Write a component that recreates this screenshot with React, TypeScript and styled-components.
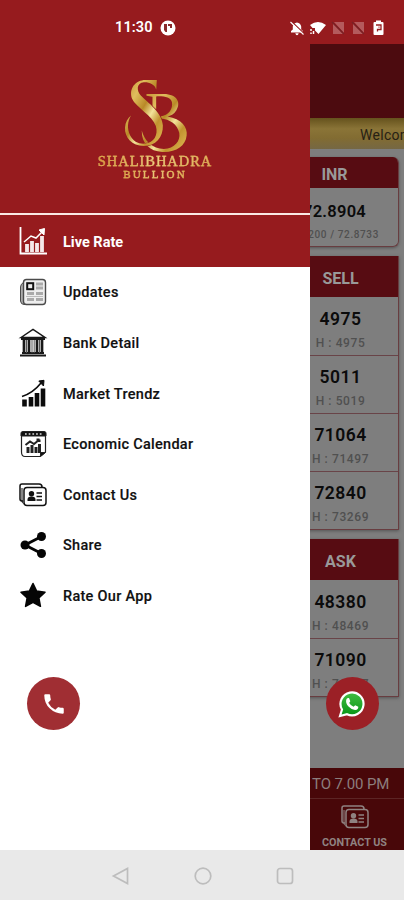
import React from "react";
import styled, { createGlobalStyle } from "styled-components";

const Global = createGlobalStyle`
  * { box-sizing: border-box; }
  body { margin: 0; font-family: Roboto, "Liberation Sans", sans-serif; }
  svg { display: block; flex: none; }
`;

const Phone = styled.div`
  position: relative;
  width: 404px;
  height: 900px;
  display: flex;
  flex-direction: column;
  overflow: hidden;
  background: #fff;
`;
const StatusBar = styled.header`
  height: 44px;
  flex: none;
  display: flex;
  align-items: center;
  padding: 11px 18px 0 115px;
  background: #961b1e;
  color: #fff;
`;
const Clock = styled.span`
  width: 45px;
  font-size: 14.5px;
  font-weight: 600;
  letter-spacing: 0.1px;
`;
const StatusIcons = styled.div`
  display: flex;
  align-items: center;
  gap: 4px;
  margin-left: auto;
`;
const Body = styled.main`
  flex: 1;
  min-height: 0;
  display: flex;
`;
const Drawer = styled.aside`
  width: 310px;
  flex: none;
  background: #fff;
`;
const Brand = styled.div`
  height: 172px;
  display: flex;
  flex-direction: column;
  align-items: center;
  padding-top: 33px;
  background: #961b1e;
  border-bottom: 1px solid #961b1e;
  box-shadow: inset 0 -2px #fbe9e4;
`;
const BrandName = styled.div`
  margin-top: -1px;
  font: 14.5px/17px "Liberation Serif", serif;
  letter-spacing: 0.95px;
  background: linear-gradient(90deg, #d9973b, #f0d58a 50%, #e0ad55);
  background-clip: text;
  color: transparent;
  -webkit-text-stroke: 0.3px #dfb25c;
`;
const BrandSub = styled(BrandName)`
  margin-top: -1px;
  font-size: 11px;
  line-height: 11px;
  letter-spacing: 2.2px;
`;
const MenuRow = styled.div<{ $active?: boolean }>`
  height: 50.6px;
  display: flex;
  align-items: center;
  gap: 15px;
  padding: 2px 0 0 18px;
  font-size: 14.5px;
  font-weight: ${(p) => (p.$active ? 700 : 500)};
  letter-spacing: ${(p) => (p.$active ? 0 : 0.28)}px;
  color: ${(p) => (p.$active ? "#fff" : "#111")};
  background: ${(p) => (p.$active ? "#961b1e" : "#fff")};
  -webkit-text-stroke: ${(p) => (p.$active ? 0 : 0.15)}px;
`;
const Page = styled.section`
  flex: 1;
  min-width: 0;
  display: flex;
  flex-direction: column;
  overflow: hidden;
  background: #7e7e7e;
`;
const PageHeader = styled.div`
  height: 74px;
  flex: none;
  background: #4c0b0f;
`;
const Ticker = styled.div`
  height: 31px;
  flex: none;
  padding-left: 50px;
  font-size: 14px;
  line-height: 34px;
  letter-spacing: 0.3px;
  white-space: nowrap;
  color: #272114;
  background: linear-gradient(#65521d, #8a7437 35%, #826c32 65%, #756744);
`;
const Card = styled.div<{ $round?: boolean }>`
  width: 117px;
  flex: none;
  margin: ${(p) => (p.$round ? "8px 0 0 -28px" : "9px 0 0 -28px")};
  border: 1px solid #683d40;
  border-top: 0;
  border-radius: ${(p) => (p.$round ? "6px" : "0")};
  box-shadow: 0 1px 3px #555;
  overflow: hidden;
`;
const CardHead = styled.div<{ $h: number }>`
  height: ${(p) => p.$h}px;
  display: flex;
  align-items: center;
  justify-content: center;
  padding-top: 3px;
  padding-right: ${(p) => (p.$h < 35 ? 12 : 0)}px;
  font-size: 16px;
  font-weight: 700;
  color: #999;
  background: #570c12;
`;
const Quote = styled.div<{ $h: number }>`
  height: ${(p) => p.$h}px;
  display: flex;
  flex-direction: column;
  align-items: center;
  padding-top: 12px;
  & + & { border-top: 1px solid #694448; padding-top: 11px; }
`;
const Price = styled.b<{ $usd?: boolean }>`
  margin-top: ${(p) => (p.$usd ? 1 : 0)}px;
  margin-left: ${(p) => (p.$usd ? -12 : 0)}px;
  font-size: ${(p) => (p.$usd ? 16.5 : 17.5)}px;
  line-height: 21px;
  letter-spacing: ${(p) => (p.$usd ? 0.25 : 0.45)}px;
  font-weight: 600;
  color: #0b0b0b;
`;
const High = styled.span<{ $usd?: boolean }>`
  margin-top: ${(p) => (p.$usd ? 5 : 6)}px;
  margin-left: ${(p) => (p.$usd ? -16 : 0)}px;
  font-size: ${(p) => (p.$usd ? 10 : 12)}px;
  font-weight: 500;
  line-height: 15px;
  letter-spacing: 0.6px;
  white-space: nowrap;
  color: #505050;
`;
const Hours = styled.div`
  height: 31px;
  flex: none;
  margin-top: auto;
  padding-left: 2px;
  font-size: 15px;
  line-height: 33px;
  letter-spacing: -0.1px;
  white-space: nowrap;
  color: #8c7e7d;
  background: #480709;
  border-bottom: 1px solid #5c2525;
`;
const Tab = styled.div`
  height: 51px;
  flex: none;
  display: flex;
  flex-direction: column;
  align-items: center;
  gap: 5px;
  padding: 4px 5px 0 0;
  font-size: 10.8px;
  font-weight: 700;
  line-height: 13px;
  color: #8f8281;
  background: #480709;
`;
const NavBar = styled.nav`
  height: 50px;
  flex: none;
  display: flex;
  justify-content: center;
  align-items: center;
  gap: 62px;
  padding: 1px 0 0 2px;
  background: #e9e9e9;
`;
const Fab = styled.button<{ $x: number }>`
  position: absolute;
  top: 677px;
  left: ${(p) => p.$x}px;
  width: 53px;
  height: 53px;
  display: grid;
  place-items: center;
  padding: 0;
  border: 0;
  border-radius: 50%;
  background: ${(p) => (p.$x > 200 ? "#9b2026" : "#a02e33")};
`;

const Monogram = () => (
  <svg width="67" height="77" viewBox="125 35 200 230">
    <defs>
      <linearGradient id="gold" x1="0" y1="0" x2="1" y2="1">
        <stop offset="0" stopColor="#c28b2c" />
        <stop offset=".25" stopColor="#e0bd5d" />
        <stop offset=".45" stopColor="#b98927" />
        <stop offset=".6" stopColor="#f3e39b" />
        <stop offset=".75" stopColor="#c2932f" />
        <stop offset="1" stopColor="#e2bd58" />
      </linearGradient>
    </defs>
    <g fill="url(#gold)">
      <path d="M198 86H245C290 84 302 112 287 135C280 146 270 151 261 153C302 160 322 185 318 210C315 242 285 261 245 259C208 257 183 234 184 195C192 226 216 250 250 250C282 249 300 225 296 202C291 177 268 161 240 159V153C264 151 278 130 274 110C270 95 252 92 227 93V131L216 122V94L198 91Z" />
      <path stroke="#961b1e" strokeWidth="3" paintOrder="stroke" d="M229 44L227 72C222 56 205 50 190 51C168 53 168 76 181 90C201 110 246 142 247 180C248 216 225 241 190 241C155 241 132 216 134 186C135 170 142 158 152 150C141 168 140 190 149 209C159 228 175 236 194 234C220 231 234 208 226 181C216 151 166 125 155 100C144 70 165 44 195 44Z" />
    </g>
  </svg>
);

const ContactIcon = ({ tint = "#111", paper = "#fff" }) => (
  <svg width="30" height="28" viewBox="0 0 30 28" fill="none" stroke={tint} strokeWidth="1.5">
    <path d="M5 20H4Q2 20 2 18V5Q2 3 4 3H21Q24 3 24 6" />
    <path d="M5.500 22.500Q4 22 4 20V7" strokeWidth="1" />
    <rect x="6" y="6.500" width="22" height="18" rx="3" fill={paper} />
    <circle cx="13.500" cy="12.700" r="2.700" fill={tint} stroke="none" />
    <path d="M9.500 20v-1.500q0-3 4-3t4 3V20z" fill={tint} stroke="none" />
    <path d="M18.500 12H24M18.500 15.500H24M18.500 19H24" />
  </svg>
);

const icons: Record<string, React.ReactNode> = {
  live: (
    <svg width="30" height="30" viewBox="0 0 30 30" fill="none" stroke="#fff">
      <path d="M2.500 0V26.500H29" strokeWidth="1.800" />
      <path d="M9 25V17M14 25V14M19 25V16M24 25V9" strokeWidth="3.800" opacity=".9" />
      <path d="M6 15L13 9L18 11L24 5" strokeWidth="1.500" />
      <path d="M21 3L26.500 1.500L26 8Z" fill="#fff" />
    </svg>
  ),
  news: (
    <svg width="30" height="30" viewBox="0 0 30 30" fill="none" stroke="#4b4b4b">
      <path d="M6 4Q2.500 6 2.500 9V23Q3 26.500 6 26.500H25" fill="#aaa" />
      <rect x="5.500" y="1.500" width="22" height="25" rx="3" fill="#eee" strokeWidth="1.400" />
      <rect x="9.200" y="5.200" width="6" height="6" stroke="#111" strokeWidth="2" />
      <path d="M18 6H25M18 10H25M9 15.500H16M18 15.500H25M9 21.500H16M18 21.500H25" stroke="#aaa" strokeWidth="3" />
      <path d="M8 18.500H25" stroke="#bbb" />
    </svg>
  ),
  bank: (
    <svg width="30" height="30" viewBox="0 0 30 30" fill="none" stroke="#181818" strokeWidth="1.500">
      <path d="M3 9.500L15 1.500L27 9.500Z" fill="#fff" />
      <path d="M3 11H27M4 25H26M2 27.500H28" strokeWidth="1.800" />
      <path d="M6 12V25M24 12V25M11 12V25M19 12V25" strokeWidth="2.700" />
      <path d="M8.500 12V25M14 12V25M16.200 12V25M21.500 12V25" stroke="#555" strokeWidth="1" />
    </svg>
  ),
  trend: (
    <svg width="30" height="30" viewBox="0 0 30 30" fill="none" stroke="#0b0b0b">
      <path d="M6.500 27.500V20.500M13 27.500V18M19 27.500V14M25 27.500V9.500" strokeWidth="4.600" />
      <path d="M4 17.500Q15 14 23 4" strokeWidth="1.600" />
      <path d="M20.800 2L26 1.300L25.500 7Z" fill="#111" />
    </svg>
  ),
  calendar: (
    <svg width="30" height="30" viewBox="0 0 30 30" fill="none" stroke="#222">
      <path d="M3.500 4V22Q3.500 26.500 7 26.500H22L27.500 22V4" strokeWidth="1.200" />
      <path d="M3 6V3Q3 1.500 5 1.500H26Q28 1.500 28 3V6Z" fill="#111" />
      <path d="M7 4H25" stroke="#ddd" strokeWidth="1.500" strokeDasharray="1.700 2" />
      <path d="M10 23V17M14 23V15M18 23V17M21.500 23V14" strokeWidth="3" />
      <path d="M7.500 15L12 11.500L16 14L21.500 9.500M21.500 9.500H18.500M21.500 9.500V12" strokeWidth="2" />
      <path d="M22.500 26.500V22.500H27.500Z" fill="#111" />
    </svg>
  ),
  contact: <ContactIcon />,
  share: (
    <svg width="30" height="30" viewBox="0 0 30 30" fill="#050505">
      <path d="M23.500 5.500L7 14L23.500 22.500" fill="none" stroke="#050505" strokeWidth="2.800" />
      <circle cx="23.500" cy="5.500" r="4.500" />
      <circle cx="7" cy="14" r="4.500" />
      <circle cx="23.500" cy="22.500" r="4.500" />
    </svg>
  ),
  star: (
    <svg width="30" height="30" viewBox="0 0 30 30">
      <path d="M15 2.500L18.600 10L27 11.200L20.800 17L22.400 25.300L15 21.400L7.600 25.300L9.200 17L3 11.200L11.400 10Z" fill="#050505" stroke="#050505" strokeWidth="1.600" strokeLinejoin="round" />
    </svg>
  ),
};

const menu = [
  ["live", "Live Rate"],
  ["news", "Updates"],
  ["bank", "Bank Detail"],
  ["trend", "Market Trendz"],
  ["calendar", "Economic Calendar"],
  ["contact", "Contact Us"],
  ["share", "Share"],
  ["star", "Rate Our App"],
];

const MissingSignal = () => (
  <svg width="16" height="16" viewBox="0 0 16 16">
    <path d="M4 2L14 13V2ZM3 3V14H13Z" fill="#b45a5c" />
    <path d="M2 2L14 14" stroke="#792024" strokeWidth="1.500" />
  </svg>
);

const Rates = ({ title, rows }: { title: string; rows: string[][] }) => (
  <Card>
    <CardHead $h={41}>{title}</CardHead>
    {rows.map(([price, high]) => (
      <Quote key={price} $h={58}>
        <Price>{price}</Price>
        <High>H : {high}</High>
      </Quote>
    ))}
  </Card>
);

export default function App() {
  return (
    <Phone>
      <Global />
      <StatusBar>
        <Clock>11:30</Clock>
        <svg width="16" height="16" viewBox="0 0 16 16">
          <circle cx="8" cy="8" r="7.500" fill="#fff" />
          <path d="M4 4H7V12H5.500L4 10ZM8 4H12V8H10V6H8Z" fill="#8a2a2c" />
        </svg>
        <StatusIcons>
          <svg width="16" height="16" viewBox="0 0 16 16">
            <path d="M2 12.500V11L3.800 9.500V6.500Q4.500 3 8 2.500Q11.500 3 12.200 6.500V9.500L14 11V12.500ZM6.300 13.300H9.700Q9.200 15.300 8 15.300T6.300 13.300" fill="#fff" />
            <path d="M2.500 1.500L15 13.500" stroke="#961b1e" strokeWidth="1.200" />
            <path d="M1.500 2L14.500 14.500" stroke="#fff" strokeWidth="1.100" />
          </svg>
          <svg width="17" height="16" viewBox="0 0 17 16">
            <path d="M1 5Q9-1 17 5L9.500 14L6 10.500V8H3.500Z" fill="#fff" />
            <path d="M2 9V11M2 12.500V14M4.500 11V14" stroke="#fff" strokeWidth="1.500" />
          </svg>
          <MissingSignal />
          <MissingSignal />
          <svg width="16" height="16" viewBox="0 0 16 16">
            <path d="M6 .5H11V2H12.500Q13.500 2 13.500 3V14Q13.500 15 12.500 15H4.500Q3.500 15 3.500 14V3Q3.500 2 4.500 2H6Z" fill="#fff" />
            <path d="M6 5H11V9.500H7.500V11.500M8.500 7.200H9.500" fill="none" stroke="#961b1e" strokeWidth="1.300" />
          </svg>
        </StatusIcons>
      </StatusBar>
      <Body>
        <Drawer>
          <Brand>
            <Monogram />
            <BrandName>SHALIBHADRA</BrandName>
            <BrandSub>BULLION</BrandSub>
          </Brand>
          {menu.map(([icon, label], i) => (
            <MenuRow key={icon} $active={i === 0}>
              {icons[icon]}
              {label}
            </MenuRow>
          ))}
        </Drawer>
        <Page>
          <PageHeader />
          <Ticker>Welcome to Shalibhadra Bullion</Ticker>
          <Card $round>
            <CardHead $h={31}>INR</CardHead>
            <Quote $h={58}>
              <Price $usd>72.8904</Price>
              <High $usd>72.8200 / 72.8733</High>
            </Quote>
          </Card>
          <Rates
            title="SELL"
            rows={[
              ["4975", "4975"],
              ["5011", "5019"],
              ["71064", "71497"],
              ["72840", "73269"],
            ]}
          />
          <Rates
            title="ASK"
            rows={[
              ["48380", "48469"],
              ["71090", "71497"],
            ]}
          />
          <Hours>TO 7.00 PM</Hours>
          <Tab>
            <ContactIcon tint="#8f8281" paper="#480709" />
            CONTACT US
          </Tab>
        </Page>
      </Body>
      <NavBar>
        <svg width="20" height="20" viewBox="0 0 20 20" fill="none" stroke="#bdbdbd" strokeWidth="1.700">
          <path d="M2.500 10L16.500 2.500V17.500Z" />
        </svg>
        <svg width="20" height="20" viewBox="0 0 20 20" fill="none" stroke="#bdbdbd" strokeWidth="1.700">
          <circle cx="10" cy="10" r="7.800" />
        </svg>
        <svg width="20" height="20" viewBox="0 0 20 20" fill="none" stroke="#bdbdbd" strokeWidth="1.700">
          <rect x="2.500" y="2.500" width="15" height="15" rx="2.500" />
        </svg>
      </NavBar>
      <Fab $x={27} aria-label="Call">
        <svg width="26" height="26" viewBox="0 0 24 24" fill="#fff">
          <path d="M6.620 10.790a15.150 15.150 0 0 0 6.590 6.590l2.200-2.200a1 1 0 0 1 1.020-.24 11.400 11.400 0 0 0 3.570.57 1 1 0 0 1 1 1V20a1 1 0 0 1-1 1A17 17 0 0 1 3 4a1 1 0 0 1 1-1h3.500a1 1 0 0 1 1 1 11.400 11.400 0 0 0 .57 3.570 1 1 0 0 1-.25 1.020z" />
        </svg>
      </Fab>
      <Fab $x={325.5} aria-label="WhatsApp">
        <svg width="28" height="28" viewBox="0 0 28 28">
          <defs>
            <linearGradient id="green" x2="0" y2="1">
              <stop stopColor="#43bd43" />
              <stop offset="1" stopColor="#079516" />
            </linearGradient>
          </defs>
          <path d="M2 26L4 19.500A11.500 11.500 0 1 1 9 24.200Z" fill="url(#green)" stroke="#fff" strokeWidth="2.200" />
          <path d="M8.500 9Q9.500 7.500 11 8L12.300 11.200L11.200 12.900Q12.800 15.500 15.600 16.800L17.200 15.200L20.300 16.700Q20.500 19.500 17.200 20Q14 20.100 10.500 16.500T8.500 9" fill="#fff" />
        </svg>
      </Fab>
    </Phone>
  );
}
